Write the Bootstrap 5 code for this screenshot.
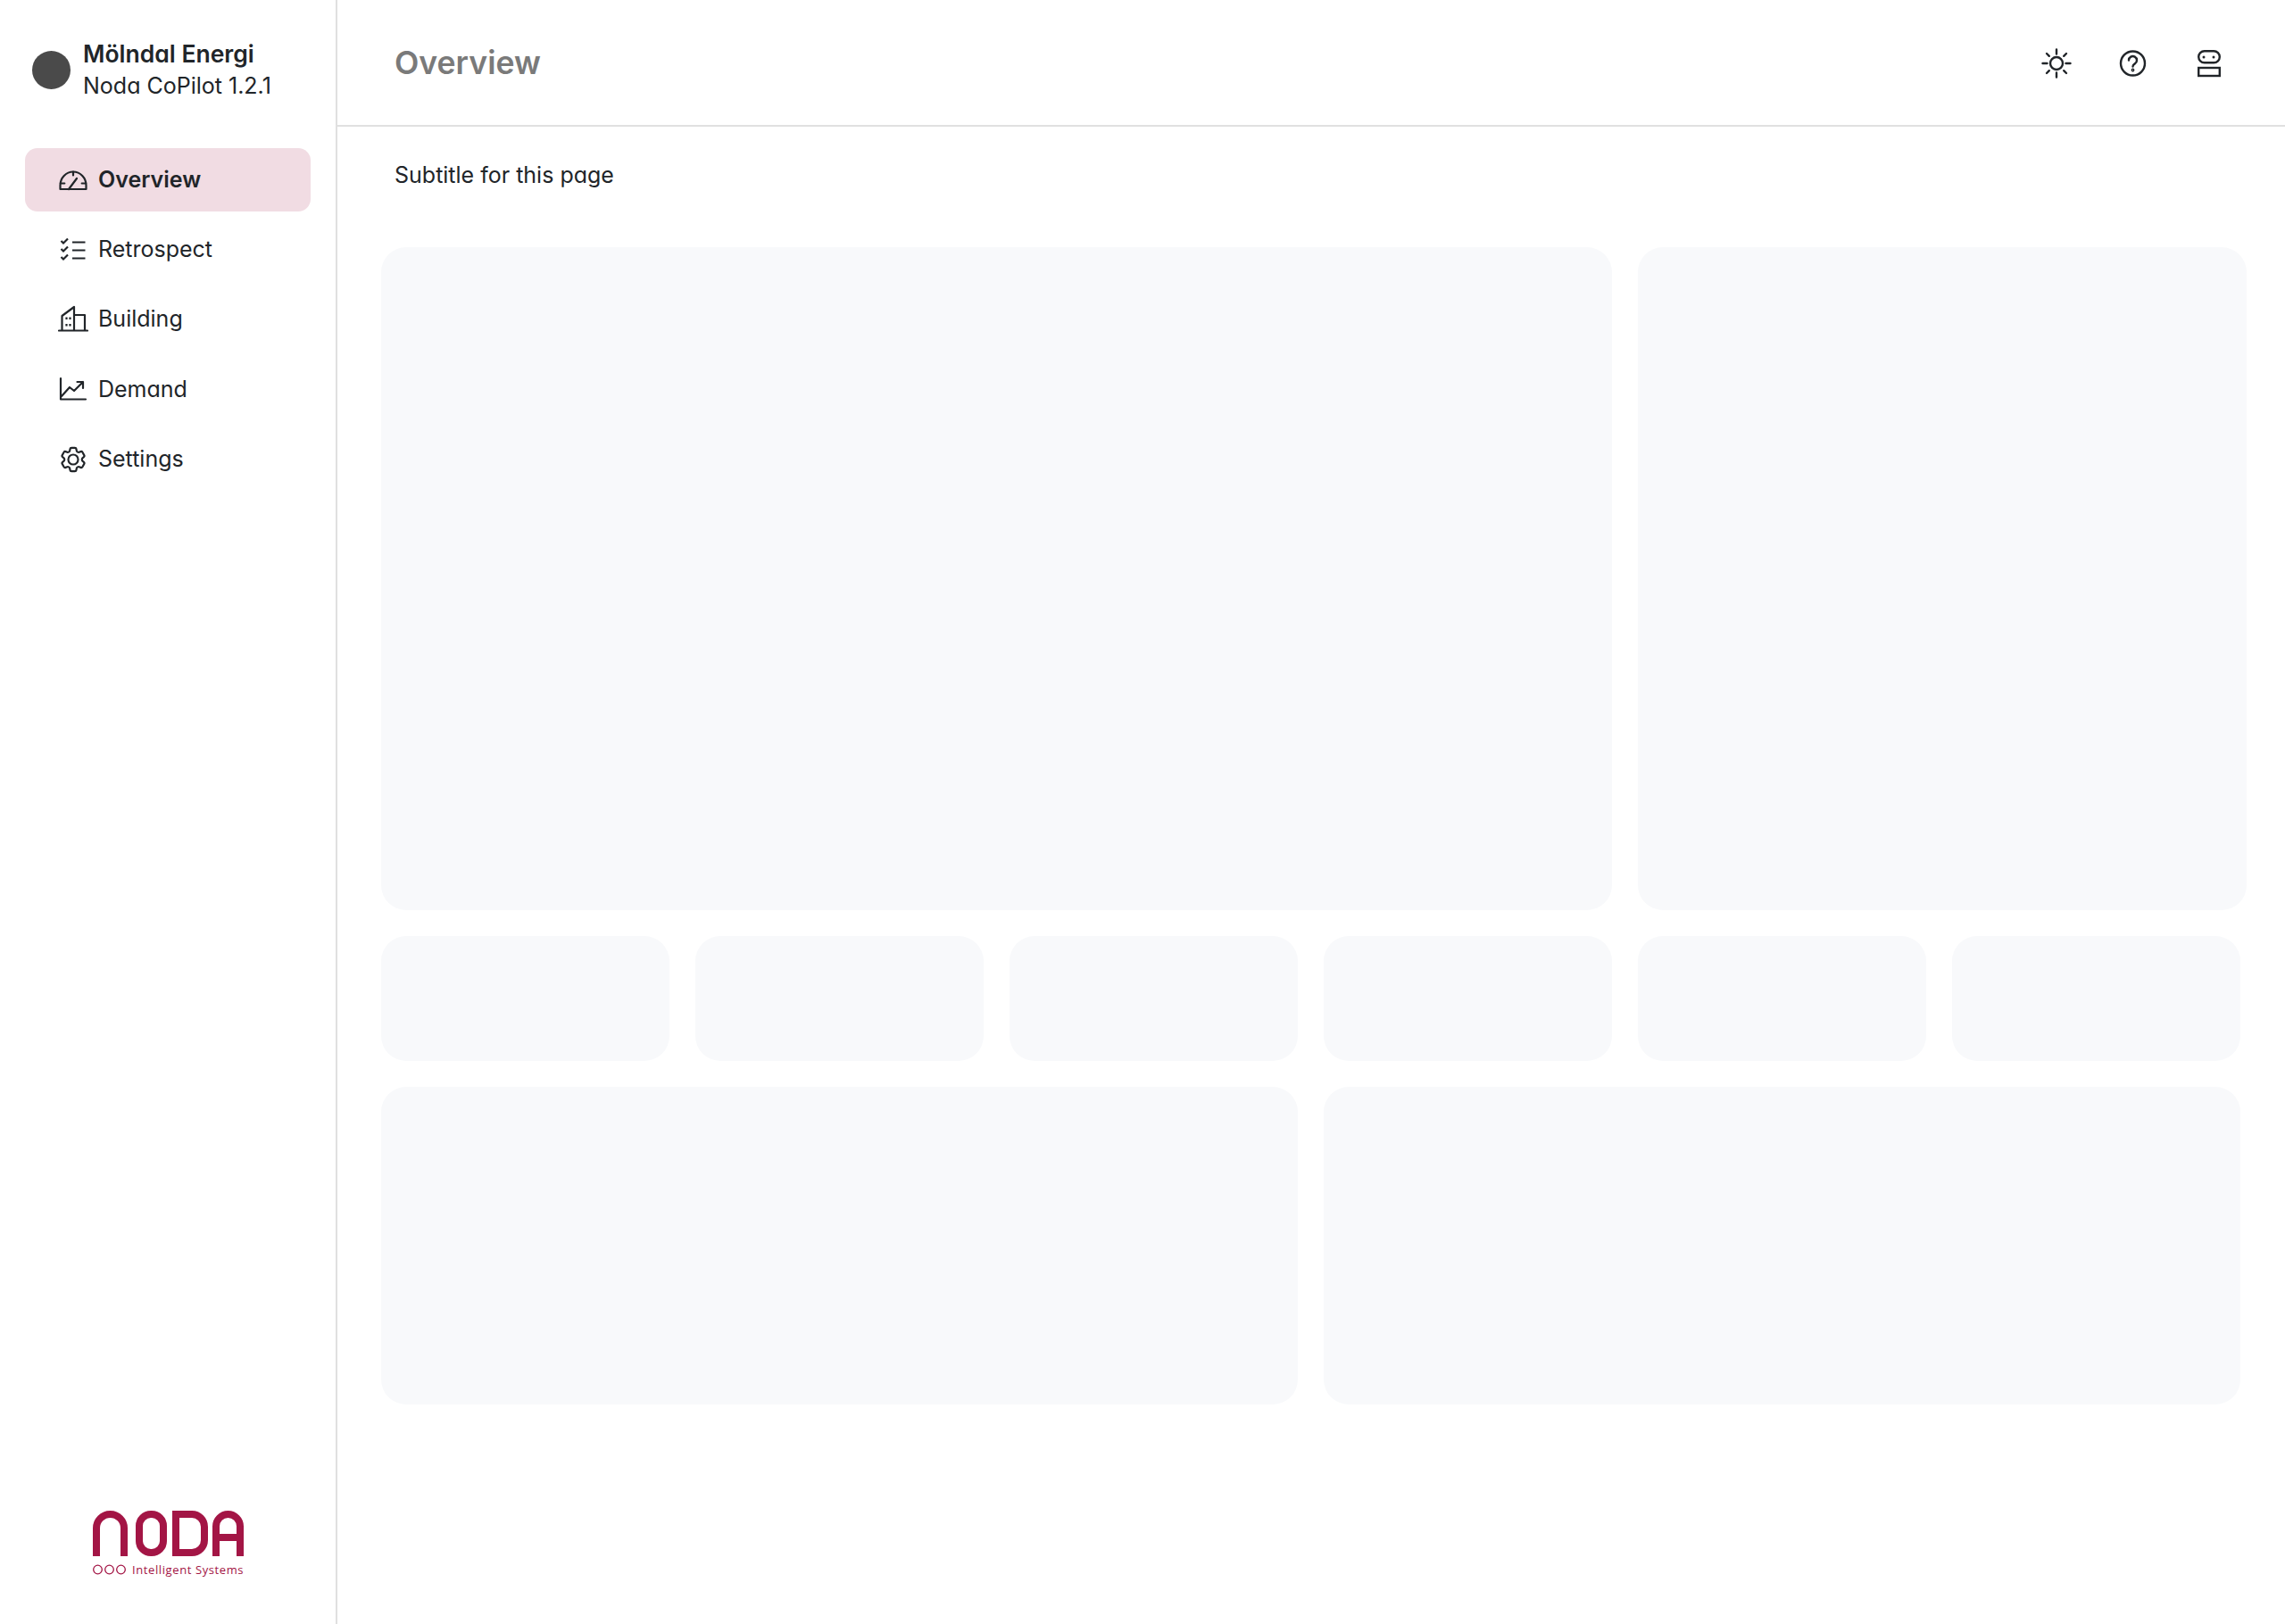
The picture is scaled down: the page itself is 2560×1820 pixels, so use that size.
<!DOCTYPE html>
<html lang="en">
<head>
<meta charset="UTF-8">
<meta name="viewport" content="width=device-width, initial-scale=1.0">
<title>Overview</title>
<link href="https://cdn.jsdelivr.net/npm/bootstrap@5.3.0/dist/css/bootstrap.min.css" rel="stylesheet">
<style>
  body {
    font-family: Inter, "Liberation Sans", sans-serif;
    font-feature-settings: "cv11";
    background-color: #fff;
    color: #212529;
    height: 1820px;
    font-size: 25px;
  }
  .side-bar {
    width: 378px;
    height: 1820px;
    border-right: 2px solid #e0e0e0;
    padding: 42px 28px 49px;
  }
  .org-dot {
    width: 43px;
    height: 43px;
    border-radius: 50%;
    background-color: #4a4a4a;
    margin-left: 8px;
  }
  .org-text { margin-left: -2px; }
  .org-name { font-size: 26.5px; font-weight: 600; line-height: 36px; }
  .org-sub { line-height: 36px; }
  .side-menu { margin-top: 52px; gap: 7.3px; }
  .side-item {
    height: 71px;
    padding-left: 37px;
    border-radius: 14px;
    color: #212529;
    text-decoration: none;
    gap: 11px;
  }
  .side-item.is-active { background-color: #f1dce3; font-weight: 600; }
  .side-item svg { width: 34px; height: 34px; flex: none; }
  .logo-word { width: 169px; height: 78px; }
  .top-bar {
    height: 142px;
    border-bottom: 2px solid #e0e0e0;
    padding: 0 68px 0 64px;
  }
  .page-title { font-size: 35.6px; font-weight: 600; color: #7a7a7a; margin: 2px 0 0; }
  .top-icons { gap: 51.5px; margin-top: 1px; }
  .top-icons svg { width: 34px; height: 34px; }
  .page-sub { margin: 34px 0 0 64px; line-height: 40px; }
  .block-area { margin: 61px 0 0 49px; gap: 29px; }
  .block-row { gap: 29px; }
  .block { background-color: #f8f9fb; border-radius: 28px; flex: none; }
  .block-big { width: 1379px; height: 743px; }
  .block-side { width: 682px; height: 743px; }
  .block-tiny { width: 323px; height: 140px; }
  .block-half { width: 1027px; height: 356px; }
</style>
</head>
<body>
<div class="d-flex">
  <aside class="side-bar d-flex flex-column flex-shrink-0">
    <div class="d-flex align-items-center gap-3">
      <div class="org-dot"></div>
      <div class="org-text">
        <div class="org-name">Mölndal Energi</div>
        <div class="org-sub">Noda CoPilot 1.2.1</div>
      </div>
    </div>
    <nav class="side-menu d-flex flex-column">
      <a href="#" class="side-item is-active d-flex align-items-center">
        <!-- gauge -->
        <svg viewBox="0 0 34 34" fill="none" stroke="#212529" stroke-width="2.200" stroke-linejoin="round" stroke-linecap="round"><path d="M2.500 27v-4.500a14.500 15 0 0 1 29 0V27z"/><path d="M17 7.500v4M2.800 20.500h4.500M31.200 20.500h-4.500M12 27l9-12"/></svg>
        Overview
      </a>
      <a href="#" class="side-item d-flex align-items-center">
        <svg viewBox="0 0 34 34" fill="none" stroke="#212529" stroke-width="2.200"><path d="M3.500 7l2.500 2.500L11 4.500M3.500 16l2.500 2.500 5-5M3.500 25l2.500 2.500 5-5M16 8.500h14.500M16 17.500h14.500M16 26.500h14.500"/></svg>
        Retrospect
      </a>
      <a href="#" class="side-item d-flex align-items-center">
        <svg viewBox="0 0 34 34" fill="none" stroke="#212529" stroke-width="2.200" stroke-linejoin="round" stroke-linecap="round"><path d="M1 29.500h32M4.500 29.500V13L18 3v26.500M18 12h12v17.500"/><path d="M9.500 14.500v2.500M13.500 14.500v2.500M9.500 22v2.500M13.500 22v2.500" stroke-linecap="butt"/></svg>
        Building
      </a>
      <a href="#" class="side-item d-flex align-items-center">
        <svg viewBox="0 0 34 34" fill="none" stroke="#212529" stroke-width="2.200" stroke-linecap="round" stroke-linejoin="round"><path d="M3 5v23.500h28M4 25l9-10 5 4 10-10M21.500 9H28v7"/></svg>
        Demand
      </a>
      <a href="#" class="side-item d-flex align-items-center">
        <svg viewBox="0.300 0.300 23.400 23.400" fill="none" stroke="#212529" stroke-width="1.500" stroke-linejoin="round"><path d="M9.594 3.940c.09-.542.56-.94 1.110-.94h2.593c.55 0 1.020.398 1.110.94l.213 1.281c.063.374.313.686.645.870.074.04.147.083.22.127.324.196.72.257 1.075.124l1.217-.456a1.125 1.125 0 011.370.49l1.296 2.247a1.125 1.125 0 01-.26 1.431l-1.003.827c-.293.24-.438.613-.431.992a6.759 6.759 0 010 .255c-.007.378.138.75.43.99l1.005.828c.424.35.534.954.26 1.43l-1.298 2.247a1.125 1.125 0 01-1.369.491l-1.217-.456c-.355-.133-.75-.072-1.076.124a6.570 6.570 0 01-.22.128c-.331.183-.581.495-.644.869l-.213 1.280c-.09.543-.56.941-1.110.941h-2.594c-.55 0-1.020-.398-1.110-.94l-.213-1.281c-.062-.374-.312-.686-.644-.87a6.520 6.520 0 01-.22-.127c-.325-.196-.72-.257-1.076-.124l-1.217.456a1.125 1.125 0 01-1.369-.49l-1.297-2.247a1.125 1.125 0 01.26-1.431l1.004-.827c.292-.24.437-.613.43-.992a6.932 6.932 0 010-.255c.007-.378-.138-.75-.43-.99l-1.004-.828a1.125 1.125 0 01-.26-1.430l1.297-2.247a1.125 1.125 0 011.370-.491l1.216.456c.356.133.751.072 1.076-.124.072-.044.146-.087.22-.128.332-.183.582-.495.644-.869l.214-1.281z"/><circle cx="12" cy="12" r="3.800"/></svg>
        Settings
      </a>
    </nav>
    <div class="mt-auto d-flex justify-content-center">
      <svg class="logo-word" viewBox="0 0 169 78" fill="none">
        <g stroke="#a31545" stroke-width="8">
          <path d="M4 51V19.500a15.500 15.500 0 0 1 31 0V51"/>
          <rect x="52" y="4" width="27" height="43" rx="13"/>
          <path d="M93 4h18a14 14 0 0 1 14 14v15a14 14 0 0 1-14 14H93z"/>
          <path d="M138 51V17.500a13.500 13.500 0 0 1 27 0V51M138 30h27"/>
        </g>
        <g stroke="#a31545" stroke-width="1.300"><circle cx="5.500" cy="66" r="4.800"/><circle cx="18.500" cy="66" r="4.800"/><circle cx="31.500" cy="66" r="4.800"/></g>
        <text x="44" y="71" font-size="13" letter-spacing="0.600" fill="#a31545" font-family="Open Sans, sans-serif">Intelligent Systems</text>
      </svg>
    </div>
  </aside>
  <main class="flex-grow-1">
    <header class="top-bar d-flex align-items-center justify-content-between">
      <h1 class="page-title">Overview</h1>
      <div class="top-icons d-flex align-items-center">
        <svg viewBox="0 0 34 34" fill="none" stroke="#212529" stroke-width="2.400" stroke-linecap="round"><circle cx="17" cy="17" r="7"/><path d="M17 1.500v5M17 27.500v5M1.500 17h5M27.500 17h5M6 6l2.800 2.800M25.200 25.200L28 28M6 28l2.800-2.800M25.200 8.800L28 6"/></svg>
        <svg viewBox="0 0 34 34" fill="none" stroke="#212529" stroke-width="2.400" stroke-linecap="round"><circle cx="16.500" cy="17" r="13.500"/><path d="M12 13.500a4.500 4.500 0 1 1 6.800 3.900c-1.500.9-2.300 1.600-2.300 3.100"/><circle cx="16.500" cy="24.500" r="0.700"/></svg>
        <svg viewBox="0 0 34 34" fill="none" stroke="#212529" stroke-width="2.400"><rect x="5.200" y="3.200" width="23.600" height="13" rx="6.500"/><rect x="5.200" y="22" width="23.600" height="9"/><circle cx="11" cy="10" r="1.500" fill="#212529" stroke="none"/><circle cx="22" cy="10" r="1.500" fill="#212529" stroke="none"/></svg>
      </div>
    </header>
    <p class="page-sub">Subtitle for this page</p>
    <div class="block-area d-flex flex-column">
      <div class="block-row d-flex">
        <div class="block block-big"></div>
        <div class="block block-side"></div>
      </div>
      <div class="block-row d-flex">
        <div class="block block-tiny"></div>
        <div class="block block-tiny"></div>
        <div class="block block-tiny"></div>
        <div class="block block-tiny"></div>
        <div class="block block-tiny"></div>
        <div class="block block-tiny"></div>
      </div>
      <div class="block-row d-flex">
        <div class="block block-half"></div>
        <div class="block block-half"></div>
      </div>
    </div>
  </main>
</div>
<script src="https://cdn.jsdelivr.net/npm/bootstrap@5.3.0/dist/js/bootstrap.bundle.min.js"></script>
</body>
</html>
